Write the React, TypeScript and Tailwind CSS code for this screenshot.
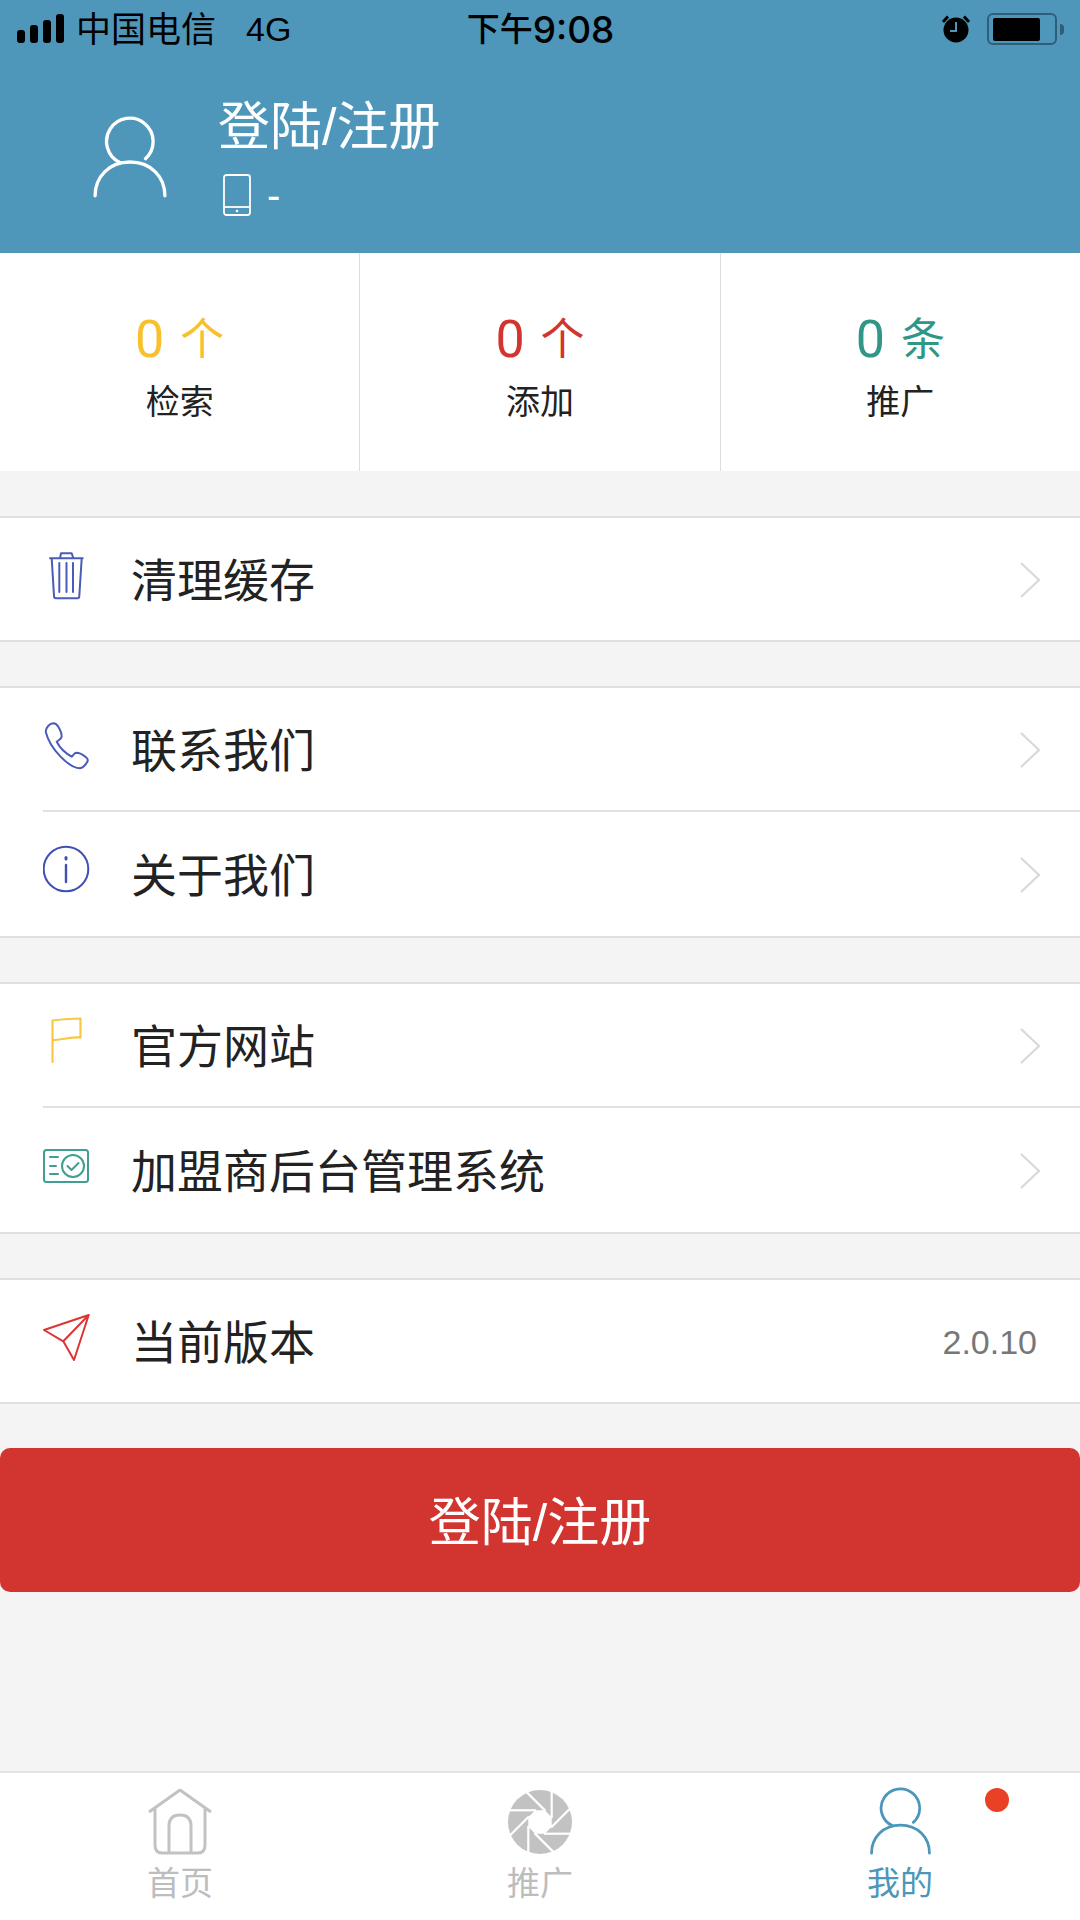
const FF = "[font-family:'Liberation_Sans','Noto_Sans_CJK_SC',sans-serif]";

function Person({ className, color, sw }: { className: string; color: string; sw: number }) {
  return (
    <svg viewBox="0 0 66 74" className={className} fill="none" stroke={color} strokeWidth={sw} strokeLinecap="round">
      <path d="M47 38.500A21 21 0 1 0 24 42" />
      <path d="M1.500 72C1.500 55 14 41.500 33 41.500C52 41.500 64.500 55 64.500 72" />
    </svg>
  );
}

function Chevron() {
  return (
    <svg viewBox="0 0 23 38" className="mt-[2px] w-[23px] h-[38px] shrink-0" fill="none" stroke="#d9d9d9" strokeWidth="2.200">
      <path d="M2 2L20 19L2 36" />
    </svg>
  );
}

const icons: Record<string, React.ReactNode> = {
  trash: (
    <g stroke="#4a5bb8" strokeWidth="2" strokeLinecap="round" strokeLinejoin="round">
      <path d="M7 9.300H39.700M17 9.300L18 4.300H28.700L30.300 9.300M8.700 9.300L11 47Q11 49.300 13 49.300H34.300Q36.300 49.300 36.300 47L38.700 9.300" />
      <path d="M16.300 14V43M23.500 14V43M30 14V43" />
    </g>
  ),
  phone: (
    <path
      d="M2.700 12.700C3 8 7 4.500 10.300 4.300C12.500 4.300 14.300 6 15.300 7.700C17 10.500 18.700 13.500 18.700 17.700C18.500 20 15.500 21 13.700 22.700C17 29 23 34.500 28.700 37.700C30.500 36.500 31 33.800 33 33.700C37 33.700 40.500 36 43 38.300C44.500 39.500 45 41.500 44.300 42.700C42.500 46 40 48.500 37 49.300C26 49 7 30 2.700 12.700Z"
      stroke="#4a5bb8"
      strokeWidth="2"
      strokeLinejoin="round"
    />
  ),
  info: (
    <g stroke="#3f51b5" strokeLinecap="round">
      <circle cx="23" cy="25" r="22.300" strokeWidth="2" />
      <path d="M23 21V38" strokeWidth="2.400" />
      <path d="M23 13.500V15" strokeWidth="3" />
    </g>
  ),
  flag: (
    <path
      d="M9.500 47V5.500C18 4.500 28 3.500 37.500 3.500V22.500C28 22 18 25 9.500 25"
      stroke="#f9c842"
      strokeWidth="2.200"
      strokeLinecap="round"
      strokeLinejoin="round"
    />
  ),
  card: (
    <g stroke="#3f9f90" strokeLinecap="round" strokeLinejoin="round" transform="translate(0 -3)">
      <rect x="1" y="13" width="44" height="32" rx="2.500" strokeWidth="2" />
      <circle cx="30" cy="29" r="11" strokeWidth="2" />
      <path d="M24.500 29L28.500 33L35.500 26" strokeWidth="2" />
      <path d="M7 20H15M7 29H13M7 37H15" strokeWidth="2" />
    </g>
  ),
  send: (
    <path
      d="M45.700 4L1 19L20.300 30.300ZM20.300 30.300L31 49L45.700 4"
      stroke="#dc3535"
      strokeWidth="2"
      strokeLinejoin="round"
    />
  ),
};

function Row({ icon, label, right, divider }: { icon: string; label: string; right?: string; divider?: boolean }) {
  return (
    <div className="flex flex-col">
      {divider && <div className="ml-[43px] h-[2px] bg-[#e2e2e2]" />}
      <div className={`flex items-center pl-[43px] pr-[38px] ${divider ? "h-[124px]" : "h-[122px]"}`}>
        <svg viewBox="0 0 48 60" fill="none" className="w-[48px] h-[60px] shrink-0">
          {icons[icon]}
        </svg>
        <span className="ml-[40px] flex-1 pt-[3px] text-[46px] leading-none text-[#222]">{label}</span>
        {right ? <span className="mr-[5px] pt-[2px] text-[34px] text-[#777]">{right}</span> : <Chevron />}
      </div>
    </div>
  );
}

function Section({ children }: { children: React.ReactNode }) {
  return <section className="border-y-2 border-[#e0e0e0] bg-white">{children}</section>;
}

function Stat({ n, unit, label, color, border }: { n: string; unit: string; label: string; color: string; border?: boolean }) {
  return (
    <div className={`flex flex-1 flex-col items-center justify-center pt-[5px] ${border ? "border-r border-[#dedede]" : ""}`}>
      <div className={`flex h-[60px] items-center gap-[16px] ${color}`}>
        <span className="font-['Roboto'] text-[52px] leading-none">{n}</span>
        <span className="text-[44px] leading-none">{unit}</span>
      </div>
      <div className="mt-[15px] text-[34px] leading-none text-[#222]">{label}</div>
    </div>
  );
}

function Aperture() {
  return (
    <svg viewBox="0 0 66 66" className="w-[66px] h-[66px]">
      <circle cx="33" cy="33" r="32" fill="#c2c2c2" />
      <polygon
        points="44.700,28.200 44.700,37.800 37.800,44.700 28.200,44.700 21.300,37.800 21.300,28.200 28.200,21.300 37.800,21.300"
        fill="#fff"
      />
      {[0, 1, 2, 3, 4, 5, 6, 7].map((k) => (
        <path key={k} d="M44.700 0V29" stroke="#fff" strokeWidth="2.200" transform={`rotate(${k * 45} 33 33)`} />
      ))}
    </svg>
  );
}

export default function App() {
  return (
    <div className={`${FF} relative flex h-[1920px] w-[1080px] flex-col overflow-hidden bg-[#f4f4f4]`}>
      <header className="h-[253px] shrink-0 bg-[#4e97ba]">
        <div className="flex h-[58px] items-center text-black">
          <div className="flex flex-1 items-center pl-[17px]">
            <svg viewBox="0 0 47 30" className="w-[47px] h-[30px]" fill="#000">
              <rect x="0" y="16" width="8" height="13" rx="3" />
              <rect x="13" y="11" width="8" height="18" rx="3" />
              <rect x="26" y="6" width="8" height="23" rx="3" />
              <rect x="39" y="0" width="8" height="29" rx="3" />
            </svg>
            <span className="ml-[12px] text-[35px] leading-none">中国电信</span>
            <span className="ml-[30px] text-[34px] leading-none">4G</span>
          </div>
          <div className="flex items-center text-center leading-none">
            <span className="text-[33px] font-medium">下午</span>
            <span className="font-['Inter'] text-[37px] font-medium">9:08</span>
          </div>
          <div className="flex flex-1 items-center justify-end pr-[16px]">
            <svg viewBox="0 0 30 30" className="w-[30px] h-[30px]">
              <circle cx="15" cy="16" r="12.500" fill="#000" />
              <path d="M15 8V17H9" fill="none" stroke="#4e97ba" strokeWidth="2" />
              <path d="M2 8L7 2.500M28 8L23 2.500" stroke="#000" strokeWidth="3" />
            </svg>
            <div className="ml-[16px] flex items-center">
              <div className="flex h-[32px] w-[70px] items-center rounded-[6px] border-2 border-[#2f5f78] pl-[4px]">
                <div className="h-[23px] w-[47px] rounded-[2px] bg-black" />
              </div>
              <div className="ml-[3px] h-[11px] w-[4px] rounded-r-[4px] bg-[#2f5f78]" />
            </div>
          </div>
        </div>
        <div className="mt-[40px] flex items-start pl-[92px]">
          <Person className="mt-[18px] h-[82px] w-[76px]" color="#fff" sw={3} />
          <div className="ml-[50px] flex flex-col">
            <div className="h-[52px] pt-[3px] text-[52px] leading-none text-white">登陆/注册</div>
            <div className="mt-[24px] flex items-center pl-[5px]">
              <svg viewBox="0 0 28 42" className="h-[42px] w-[28px]" fill="none" stroke="#fff" strokeWidth="1.800">
                <rect x="1" y="1" width="26" height="40" rx="2.500" />
                <path d="M1 33H27" />
                <circle cx="14" cy="37" r="1.300" fill="#fff" stroke="none" />
              </svg>
              <span className="ml-[16px] text-[40px] leading-none text-white">-</span>
            </div>
          </div>
        </div>
      </header>

      <div className="flex h-[218px] shrink-0 bg-white">
        <Stat n="0" unit="个" label="检索" color="text-[#f9c02e]" border />
        <Stat n="0" unit="个" label="添加" color="text-[#d2342f]" border />
        <Stat n="0" unit="条" label="推广" color="text-[#2f9688]" />
      </div>

      <main className="flex flex-1 flex-col gap-[44px] pt-[45px]">
        <Section>
          <Row icon="trash" label="清理缓存" />
        </Section>
        <Section>
          <Row icon="phone" label="联系我们" />
          <Row icon="info" label="关于我们" divider />
        </Section>
        <Section>
          <Row icon="flag" label="官方网站" />
          <Row icon="card" label="加盟商后台管理系统" divider />
        </Section>
        <Section>
          <Row icon="send" label="当前版本" right="2.0.10" />
        </Section>
        <button className="flex h-[144px] w-full items-center justify-center rounded-[10px] bg-[#d2342f] pt-[6px] text-[52px] text-white">
          登陆/注册
        </button>
      </main>

      <nav className="relative flex h-[149px] shrink-0 border-t-2 border-[#e4e4e4] bg-white text-[33px] leading-none">
        <div className="flex flex-1 flex-col items-center pt-[16px] text-[#bdbdbd]">
          <svg viewBox="0 0 64 66" className="h-[66px] w-[64px]" fill="none" stroke="#c2c2c2" strokeWidth="3" strokeLinejoin="round">
            <path d="M1 23L32 1L63 23M7 20V56Q7 64 14 64H50Q57 64 57 56V20" />
            <path d="M21 64V37Q21 26 32 26Q43 26 43 37V64" />
          </svg>
          <span className="mt-[12px]">首页</span>
        </div>
        <div className="flex flex-1 flex-col items-center pt-[16px] text-[#bdbdbd]">
          <Aperture />
          <span className="mt-[12px]">推广</span>
        </div>
        <div className="flex flex-1 flex-col items-center pt-[14px] text-[#4b96b9]">
          <Person className="h-[68px] w-[61px]" color="#4b96b9" sw={3} />
          <span className="mt-[12px]">我的</span>
        </div>
        <div className="absolute left-[985px] top-[15px] h-[24px] w-[24px] rounded-full bg-[#e94125]" />
      </nav>
    </div>
  );
}
